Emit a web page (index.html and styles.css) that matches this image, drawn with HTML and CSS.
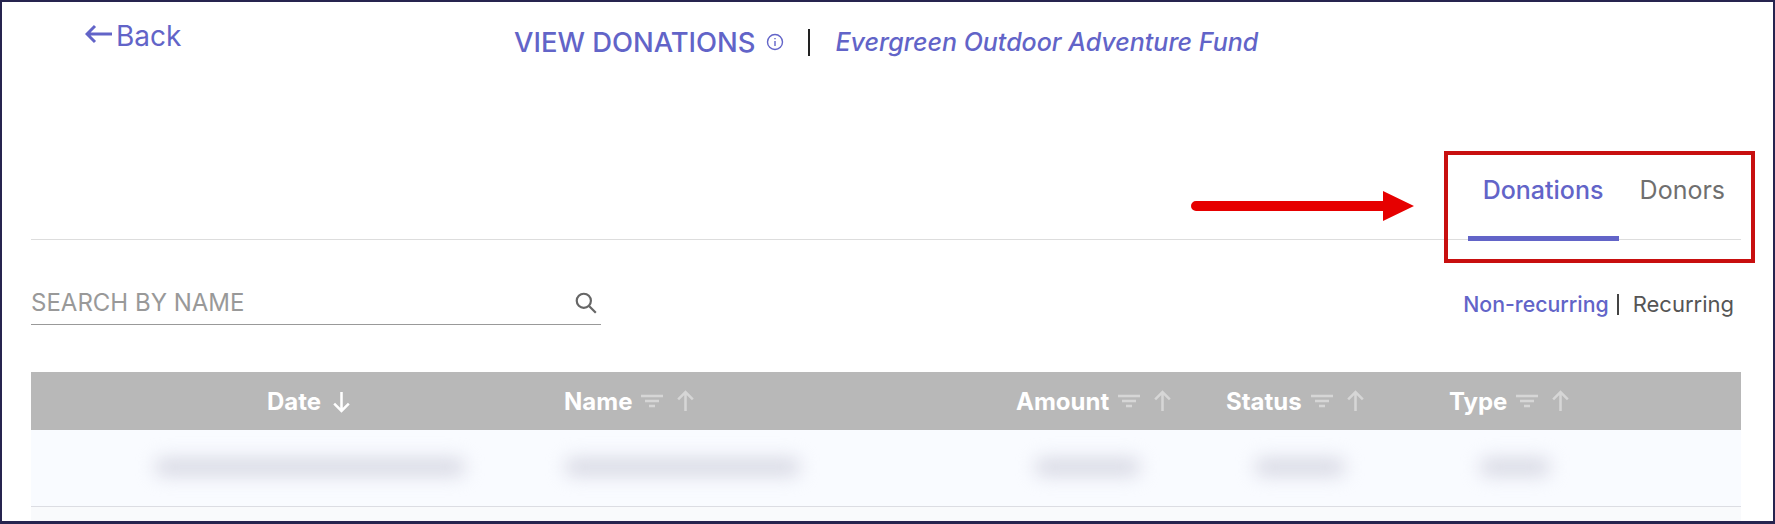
FILE: index.html
```html
<!DOCTYPE html>
<html>
<head>
    <meta charset="utf-8">
    <link rel="stylesheet" href="styles.css">
</head>
<body>
    <div class="frame">
        <!-- Top bar -->
        <div class="topbar">
            <a class="back">
                <svg class="back-arrow" viewBox="0 0 28 20" width="28" height="20"><path d="M27 10H2M10 2L2 10L10 18"/></svg>
                <span>Back</span>
            </a>
            <div class="title">
                <span class="title-main">VIEW DONATIONS</span>
                <svg class="info" viewBox="0 0 18 18" width="18" height="18"><circle cx="9" cy="9" r="7.5"/><path d="M9 8v5M9 5v1.2"/></svg>
                <span class="title-sep"></span>
                <span class="title-fund">Evergreen Outdoor Adventure Fund</span>
            </div>
        </div>

        <!-- Tabs -->
        <div class="tabs">
            <div class="tab active">Donations</div>
            <div class="tab">Donors</div>
        </div>

        <!-- Search and filter -->
        <div class="tools">
            <div class="search">
                <span class="search-label">SEARCH BY NAME</span>
                <svg viewBox="0 0 22 22" width="24" height="24"><circle cx="9" cy="9" r="6.5"/><path d="M14 14L20 20"/></svg>
            </div>
            <div class="kinds">
                <span class="kind-on">Non-recurring</span>
                <span class="kind-sep"></span>
                <span class="kind-off">Recurring</span>
            </div>
        </div>

        <!-- Table -->
        <div class="table">
            <div class="thead">
                <div class="th th-date">Date
                    <svg class="sort on" viewBox="0 0 20 22" width="21" height="23"><path d="M10 2V20M3 13L10 20L17 13"/></svg>
                </div>
                <div class="th">Name
                    <svg class="filter" viewBox="0 0 22 14" width="22" height="14"><path d="M0 2H22M4 7H18M8 12H14"/></svg>
                    <svg class="sort" viewBox="0 0 20 22" width="21" height="23"><path d="M10 20V2M3 9L10 2L17 9"/></svg>
                </div>
                <div class="th">Amount
                    <svg class="filter" viewBox="0 0 22 14" width="22" height="14"><path d="M0 2H22M4 7H18M8 12H14"/></svg>
                    <svg class="sort" viewBox="0 0 20 22" width="21" height="23"><path d="M10 20V2M3 9L10 2L17 9"/></svg>
                </div>
                <div class="th">Status
                    <svg class="filter" viewBox="0 0 22 14" width="22" height="14"><path d="M0 2H22M4 7H18M8 12H14"/></svg>
                    <svg class="sort" viewBox="0 0 20 22" width="21" height="23"><path d="M10 20V2M3 9L10 2L17 9"/></svg>
                </div>
                <div class="th">Type
                    <svg class="filter" viewBox="0 0 22 14" width="22" height="14"><path d="M0 2H22M4 7H18M8 12H14"/></svg>
                    <svg class="sort" viewBox="0 0 20 22" width="21" height="23"><path d="M10 20V2M3 9L10 2L17 9"/></svg>
                </div>
            </div>
            <div class="row">
                <div class="td td-date"><span class="smudge w-date"></span></div>
                <div class="td td-name"><span class="smudge w-name"></span></div>
                <div class="td td-amount"><span class="smudge w-amount"></span></div>
                <div class="td td-status"><span class="smudge w-status"></span></div>
                <div class="td td-type"><span class="smudge w-type"></span></div>
            </div>
        </div>

        <!-- Annotation drawn over the page -->
        <svg class="note-arrow" viewBox="0 0 224 32" width="224" height="32"><path d="M5 11H192V1L223 16L192 31V21H5A5 5 0 0 1 5 11Z"/></svg>
        <div class="note-box"></div>
    </div>
</body>
</html>
```

FILE: styles.css
```css
* {
    box-sizing: border-box;
}
body {
    margin: 0;
    background: #ffffff;
    font-family: "Inter", "Noto Sans", sans-serif;
    overflow: hidden;
}
.frame {
    position: relative;
    width: 1775px;
    height: 524px;
    padding: 0 32px 0 29px;
    border: 2px solid #26244f;
    border-bottom-width: 3px;
    overflow: hidden;
}

/* Top bar */
.topbar {
    display: flex;
    height: 90px;
    padding-left: 54px;
}
.back {
    display: flex;
    align-items: center;
    gap: 3px;
    width: 100px;
    height: 30px;
    margin-top: 19px;
    color: #6264c8;
    font-size: 28px;
}
.back-arrow {
    flex: none;
    margin-top: -4px;
}
.back-arrow path {
    fill: none;
    stroke: #6264c8;
    stroke-width: 3;
}
.title {
    display: flex;
    align-items: center;
    height: 30px;
    margin: 25px 0 0 329px;
    color: #6264c8;
}
.title-main {
    font-size: 27.4px;
    font-weight: 500;
}
.info {
    margin-left: 11px;
}
.info circle,
.info path {
    fill: none;
    stroke: #6264c8;
    stroke-width: 1.4;
}
.title-sep {
    width: 2px;
    height: 27px;
    margin: 0 25px 0 24px;
    background: #222222;
}
.title-fund {
    font-size: 25px;
    font-style: italic;
    font-weight: 500;
}

/* Tabs */
.tabs {
    display: flex;
    justify-content: flex-end;
    height: 148px;
    padding-top: 83px;
    border-bottom: 1px solid #dddddd;
}
.tab {
    height: 66px;
    padding: 0 16px;
    color: #6f6f6f;
    font-size: 25px;
    line-height: 30px;
}
.tab.active {
    width: 151px;
    padding: 0;
    margin-right: 5px;
    color: #6264c8;
    font-weight: 500;
    text-align: center;
    border-bottom: 5px solid #6264c8;
}

/* Search and filter */
.tools {
    display: flex;
    justify-content: space-between;
    height: 132px;
    padding-top: 44px;
}
.search {
    display: flex;
    justify-content: space-between;
    align-items: center;
    width: 570px;
    height: 41px;
    padding-right: 3px;
    border-bottom: 1px solid #999999;
    color: #999999;
    font-size: 24px;
}
.search-label {
    margin-top: -4px;
}
.search svg {
    margin-top: -2px;
}
.search svg circle,
.search svg path {
    fill: none;
    stroke: #666666;
    stroke-width: 2;
}
.kinds {
    display: flex;
    align-items: center;
    height: 40px;
    padding-right: 7px;
    font-size: 22px;
}
.kind-on {
    color: #6264c8;
    font-size: 21.3px;
    font-weight: 500;
}
.kind-sep {
    width: 2px;
    height: 21px;
    margin: 0 14px 0 8px;
    background: #444444;
}
.kind-off {
    color: #555555;
}

/* Table */
.thead,
.row {
    display: grid;
    grid-template-columns: 533px 452px 210px 223px 292px;
}
.thead {
    height: 58px;
    background: #b8b8b8;
}
.th {
    display: flex;
    align-items: center;
    color: #ffffff;
    font-size: 24px;
    font-weight: 700;
}
.th-date {
    padding-left: 236px;
}
.filter {
    margin-left: 9px;
}
.filter path {
    fill: none;
    stroke: #d6d6d6;
    stroke-width: 2.4;
}
.sort {
    margin-left: 12px;
}
.sort path {
    fill: none;
    stroke: #d6d6d6;
    stroke-width: 2.4;
}
.sort.on {
    margin-left: 10px;
}
.sort.on path {
    stroke: #ffffff;
}
.row {
    height: 77px;
    background: #f9fbff;
    border-bottom: 1px solid #dcdde3;
}
.table {
    height: 150px;
    background: #f9fafc;
}
.td {
    display: flex;
    align-items: center;
}
.smudge {
    display: block;
    height: 18px;
    margin-top: -2px;
    background: #d8d9e4;
    border-radius: 8px;
    filter: blur(9px);
}
.td-date {
    padding-left: 124px;
}
.td-name {
    padding-left: 1px;
}
.td-amount {
    padding-left: 19px;
}
.td-status {
    padding-left: 29px;
}
.td-type {
    padding-left: 31px;
}
.w-date {
    width: 310px;
}
.w-name {
    width: 235px;
}
.w-amount {
    width: 105px;
}
.w-status {
    width: 90px;
}
.w-type {
    width: 70px;
}

/* Annotation */
.note-arrow {
    position: absolute;
    left: 1189px;
    top: 188px;
}
.note-arrow path {
    fill: #e60000;
}
.note-box {
    position: absolute;
    left: 1442px;
    top: 149px;
    width: 311px;
    height: 112px;
    border: 4px solid #c80f0f;
}
```
